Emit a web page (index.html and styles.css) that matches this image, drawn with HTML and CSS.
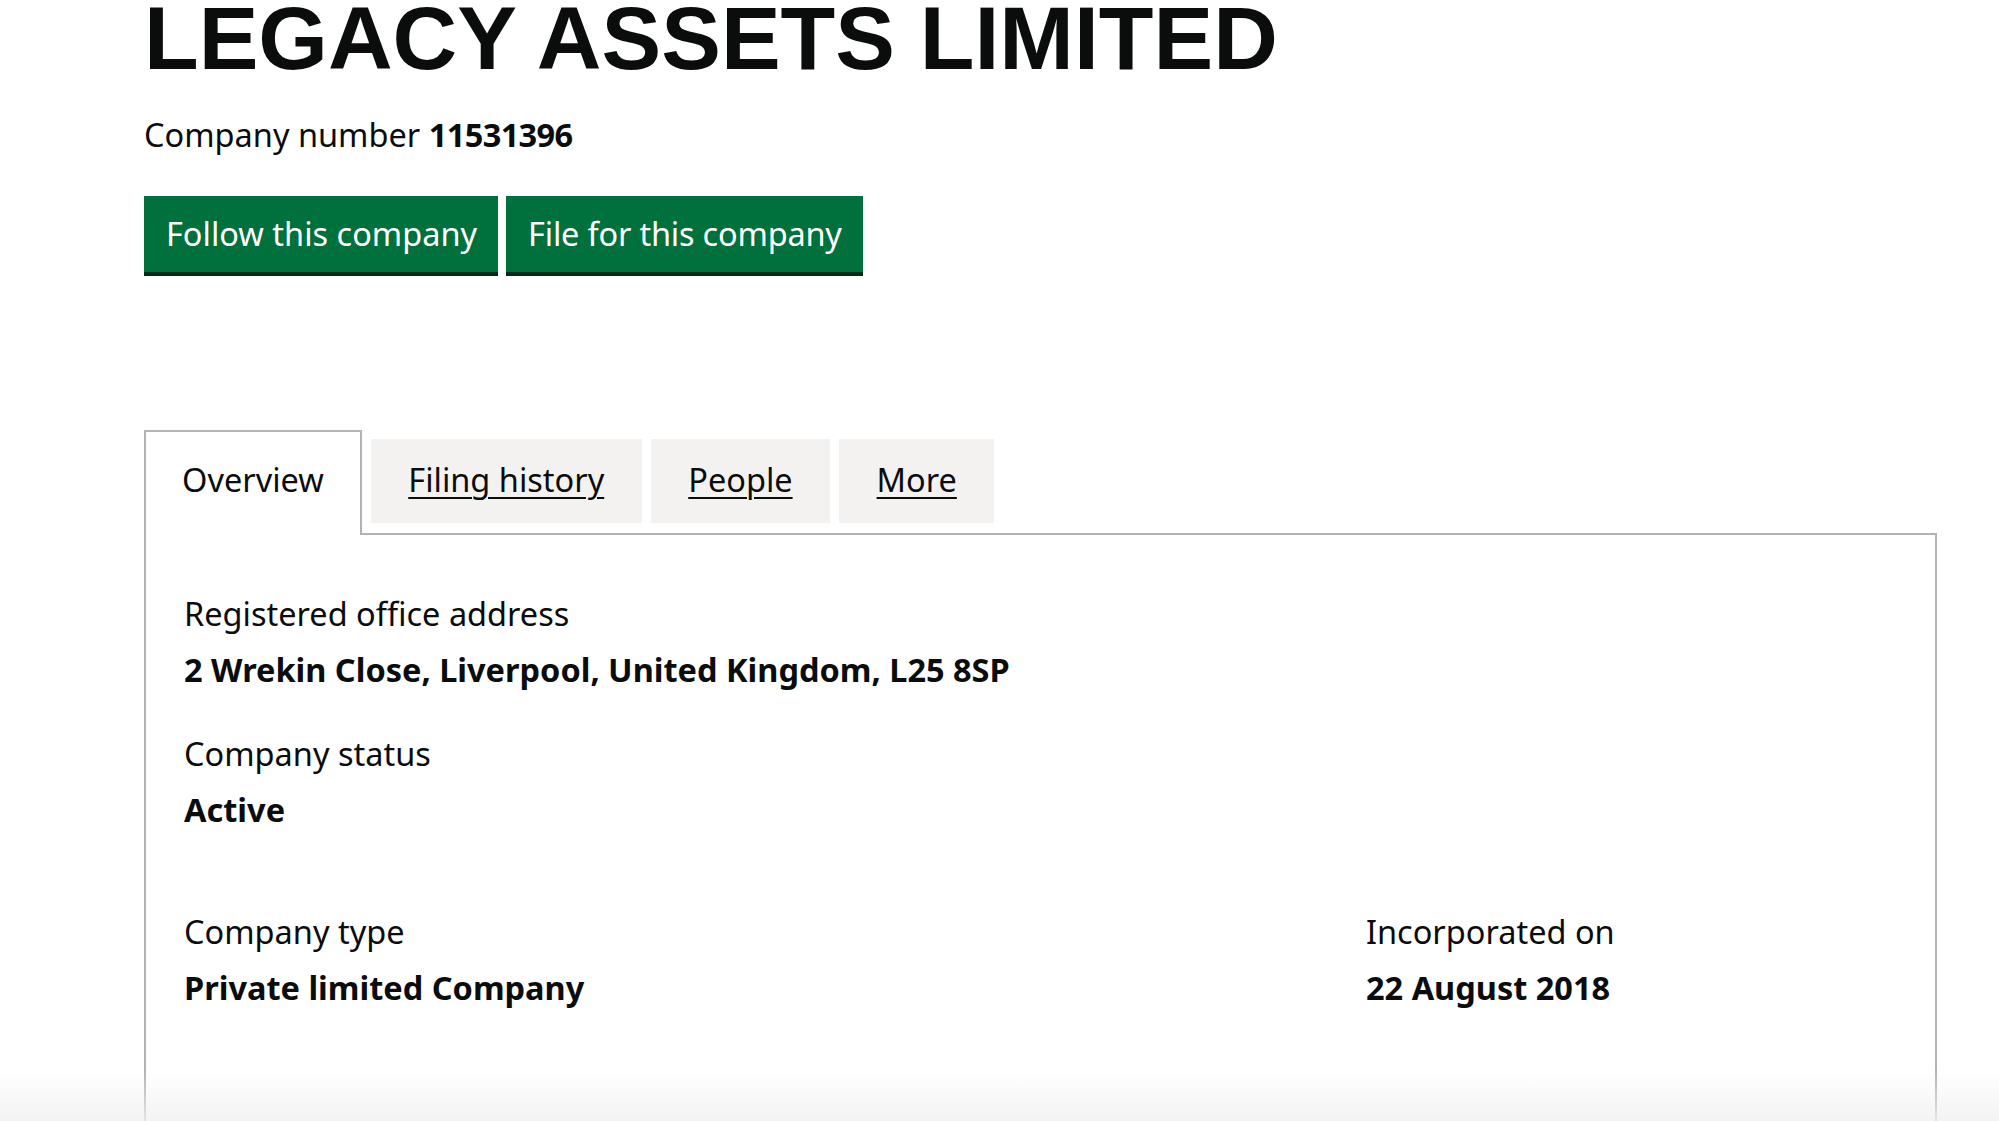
FILE: index.html
```html
<!DOCTYPE html>
<html lang="en">
<head>
<meta charset="utf-8">
<title>LEGACY ASSETS LIMITED - Overview</title>
<link rel="stylesheet" href="styles.css">
</head>
<body>
<main class="page">
  <h1 class="company-name">LEGACY ASSETS LIMITED</h1>
  <p class="company-number">Company number <strong>11531396</strong></p>
  <div class="actions">
    <a class="button" href="#">Follow this company</a>
    <a class="button button-file" href="#">File for this company</a>
  </div>
  <nav class="tabs">
    <ul class="tab-list">
      <li class="tab tab-selected"><span>Overview</span></li>
      <li class="tab"><a href="#">Filing history</a></li>
      <li class="tab"><a href="#">People</a></li>
      <li class="tab"><a href="#">More</a></li>
    </ul>
  </nav>
  <section class="panel">
    <dl class="data">
      <dt>Registered office address</dt>
      <dd>2 Wrekin Close, Liverpool, United Kingdom, L25 8SP</dd>
    </dl>
    <dl class="data">
      <dt>Company status</dt>
      <dd>Active</dd>
    </dl>
    <div class="grid-row">
      <dl class="data">
        <dt>Company type</dt>
        <dd>Private limited Company</dd>
      </dl>
      <dl class="data">
        <dt>Incorporated on</dt>
        <dd>22 August 2018</dd>
      </dl>
    </div>
  </section>
</main>
</body>
</html>
```

FILE: styles.css
```css
* { box-sizing: border-box; }
html, body { margin: 0; padding: 0; background: #ffffff; }
body {
  font-family: "Noto Sans", "Liberation Sans", sans-serif;
  font-size: 32.5px;
  color: #0b0c0c;
  height: 1121px;
  overflow: hidden;
}
.page {
  margin-left: 144px;
  width: 1793px;
}
.company-name {
  font-family: "Liberation Sans", Arial, sans-serif;
  font-weight: 700;
  font-size: 89.5px;
  line-height: 89px;
  margin: -6px 0 0;
}
.company-number {
  font-size: 32.5px;
  line-height: 40px;
  margin: 32px 0 0;
}
.company-number strong {
  font-weight: 700;
  letter-spacing: -0.6px;
}
.actions {
  display: flex;
  gap: 8px;
  margin-top: 41px;
}
.button {
  display: block;
  background: #00703c;
  color: #ffffff;
  text-decoration: none;
  font-size: 32.5px;
  line-height: 44px;
  height: 76px;
  padding: 16px 21px 16px 22px;
  box-shadow: 0 4px 0 #002d18;
}
.button-file { letter-spacing: -0.2px; }
.tabs { margin-top: 158px; }
.tab-list {
  list-style: none;
  margin: 0;
  padding: 0;
  display: flex;
  align-items: flex-start;
  border-bottom: 2px solid #b1b4b6;
}
.tab {
  margin: 9px 9px 0 0;
  height: 84px;
  padding: 21px 37.5px 0;
  background: #f3f2f1;
  font-size: 32.5px;
  line-height: 40px;
}
.tab a {
  color: #0b0c0c;
  text-decoration: underline;
  text-decoration-thickness: 2px;
  text-underline-offset: 5px;
}
.tab-selected {
  margin: 0 9px -2px 0;
  height: 105px;
  padding: 28px 36px 0;
  background: #ffffff;
  border: 2px solid #b1b4b6;
  border-bottom: 0;
}
.panel {
  border: 2px solid #b1b4b6;
  border-top: 0;
  height: 600px;
  padding: 59px 38px 0;
}
.data { margin: 0; }
.data dt {
  font-size: 32.5px;
  line-height: 40px;
}
.data dd {
  margin: 16px 0 0;
  font-size: 32.5px;
  line-height: 40px;
  font-weight: 700;
}
.data + .data { margin-top: 44px; }
.grid-row {
  display: grid;
  grid-template-columns: 1182px 1fr;
  margin-top: 82px;
}
.grid-row .data + .data { margin-top: 0; }
body::after {
  content: "";
  position: fixed;
  left: 0;
  right: 0;
  bottom: 0;
  height: 50px;
  background: linear-gradient(rgba(240, 240, 240, 0), rgba(240, 240, 240, 0.8));
  pointer-events: none;
}
```
